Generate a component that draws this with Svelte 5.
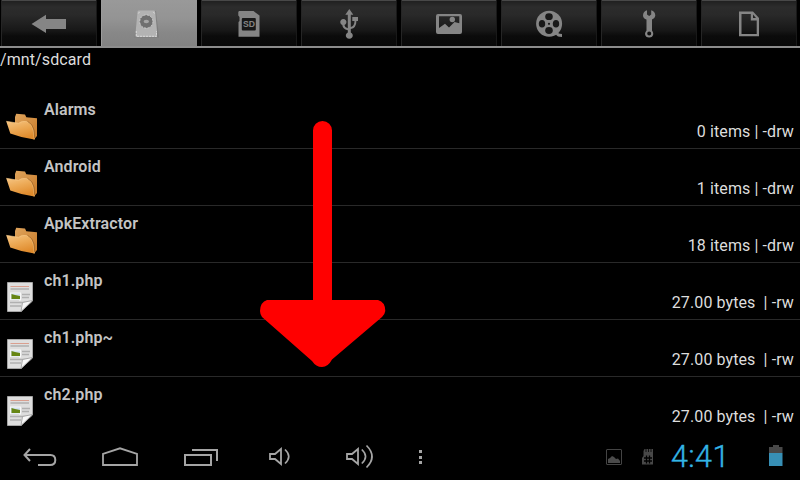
<script>
  const tabs = ['back', 'disk', 'sd', 'usb', 'image', 'film', 'tools', 'page'];
  const rows = [
    { name: 'Alarms', info: '0 items | -drw', folder: true },
    { name: 'Android', info: '1 items | -drw', folder: true },
    { name: 'ApkExtractor', info: '18 items | -drw', folder: true },
    { name: 'ch1.php', info: '27.00 bytes  | -rw' },
    { name: 'ch1.php~', info: '27.00 bytes  | -rw' },
    { name: 'ch2.php', info: '27.00 bytes  | -rw' }
  ];
</script>

<svg class="defs" width="0" height="0" aria-hidden="true">
  <defs>
    <linearGradient id="back-leaf" x1="0" y1="0" x2="1" y2="1">
      <stop offset="0" stop-color="#dfa45c" /><stop offset="1" stop-color="#c87a28" />
    </linearGradient>
    <linearGradient id="front-leaf" x1="0" y1="0" x2="0.4" y2="1">
      <stop offset="0" stop-color="#f6c583" /><stop offset="0.5" stop-color="#eca955" /><stop offset="1" stop-color="#e08c2e" />
    </linearGradient>
  </defs>
</svg>

<div class="screen">
  <nav class="tabs">
    {#each tabs as tab}
      <button class="tab" class:active={tab === 'disk'} aria-label={tab}>
        <svg width="96" height="46" viewBox="1 0 96 46" fill="#858585">
          {#if tab === 'back'}
            <path d="M31.5 24 46 14.7V19H66V29H46V33Z" />
          {:else if tab === 'disk'}
            <path d="M39 11 34.5 37.5H59L56 11Z" fill="#6f6f6f" opacity=".45" />
            <path d="M38.5 10.5H54Q55 10.5 55.2 12L57 31V37H35.7V31L37.5 12Q37.6 10.5 38.5 10.5Z" fill="#b3b3b3" />
            <path d="M36.3 31V36.3H56.5V31M38.3 13.5 40 11.3M54.5 13.5 53 11.3" fill="none" stroke="#d9d9d9" stroke-dasharray="2 1" />
            <circle cx="46.3" cy="21.5" r="6.6" fill="#707070" stroke="#d6d6d6" stroke-width=".8" stroke-dasharray="2 1.5" />
            <ellipse cx="46.3" cy="21.5" rx="2.7" ry="1.8" fill="#a6a6a6" />
          {:else if tab === 'sd'}
            <path d="M39 11H53.5L59.5 15.5V36.8H38.5V22L39.5 21V17L38.3 15.5V12Z" />
            <rect x="41.8" y="18" width="14" height="12.5" rx="1" fill="#171717" />
            <text x="48.9" y="27.3" text-anchor="middle" font-size="9" font-weight="bold" textLength="12" lengthAdjust="spacingAndGlyphs">SD</text>
          {:else if tab === 'usb'}
            <path d="M49.3 9 53.3 14.7H50.8V27Q54.5 26 54.5 21H52.3V17H58V21H56.4Q56.4 28 50.8 29V32.5A3.5 3.3 0 1 1 47.8 32.5V30.2Q42.5 29 42.3 25A3.1 3.1 0 1 1 44.4 25Q44.7 27.5 47.8 28.3V14.7H45.3Z" />
          {:else if tab === 'image'}
            <path fill-rule="evenodd" d="M38 14H60Q62 14 62 16V32Q62 34 60 34H38Q36 34 36 32V16Q36 14 38 14ZM39 16.2V28L45 23.8 49 27.5 54.5 22 59.3 23.2V16.2Z" />
            <circle cx="52.3" cy="19.5" r="2.7" />
          {:else if tab === 'film'}
            <circle cx="49.1" cy="23.8" r="13" />
            <path d="M53 35 58 31.5Q57.5 34 62 34V37Q57 37 56 34.5Z" />
            <g fill="#191919">
              <ellipse cx="49" cy="16.7" rx="3.8" ry="3.4" /><ellipse cx="49" cy="30.5" rx="3.8" ry="3.4" />
              <ellipse cx="42" cy="23.8" rx="3.2" ry="3.8" /><ellipse cx="56" cy="23.8" rx="3.2" ry="3.8" />
              <circle cx="49" cy="23.8" r="1.1" />
            </g>
          {:else if tab === 'tools'}
            <path fill-rule="evenodd" d="M47 10.2V14.5L49.2 16 51.2 14.5V10.2Q55.3 11.5 55.3 15.7Q54.8 18.8 52 19.5V30.5Q53.3 32 53.3 34A4.2 4.2 0 0 1 45 34Q45 32 46.5 30.5V19.5Q43.2 18.7 43 15.5Q43 11.5 47 10.2ZM49.2 31.6A2 2 0 1 0 49.2 35.6A2 2 0 1 0 49.2 31.6Z" />
          {:else}
            <path fill-rule="evenodd" d="M39 11.5H53L59 18V36.3H39ZM41.5 14V34H56.7V20.5H50.8V14Z" />
            <path d="M53 14.5 56 18H53Z" fill="#222" />
          {/if}
        </svg>
      </button>
    {/each}
  </nav>

  <div class="path"><span>/mnt/sdcard</span></div>

  <main class="list">
    {#each rows as row}
      <div class="row">
        <svg class="icon" class:file={!row.folder} width="40" height="36" viewBox="0 0 40 36">
          {#if row.folder}
            <path d="M15 4 16.2.8 25 1.5 26.3 4.3 37 5.3V23L34 26.5 15 17Z" fill="url(#back-leaf)" />
            <path d="M6.2 8.3 18.5 10.3Q22 7.5 26.5 8.6Q31.5 10 33.2 17L34.4 26.5Q22 25 10.3 20.5Z" fill="url(#front-leaf)" />
            <path d="M6.4 8.3 18.5 10.3Q22 7.5 26.5 8.6Q31.5 10 33.2 17L34.4 26.5" fill="none" stroke="#f9c987" stroke-width=".6" />
            <path d="M27.5 8.3Q32.7 11 34 17L34.7 25" fill="none" stroke="#965b1c" stroke-width=".7" />
          {:else}
            <path d="M7.5.5H32.5V19L21 29.5H7.5Z" fill="#dedede" stroke="#a5a5a5" />
            <path d="M10.5 4.5H29" stroke="#d99f8f" />
            <path d="M10.5 7H29M22 12.5H30M22 15.5H29M10 20.5H28M10 24H21M10 18H19" stroke="#b0b0b0" stroke-width="1.3" />
            <rect x="10.5" y="11" width="10" height="7" fill="#d3e1ed" stroke="#f8f8f8" />
            <path d="M11.5 12 15 13 20 14V17H11.5Z" fill="#668615" />
            <path d="M21 29.5 22.5 20.5 32.5 18.5Z" fill="#f8f8f8" stroke="#999" stroke-width=".8" />
          {/if}
        </svg>
        <span class="name">{row.name}</span>
        <span class="info">{row.info}</span>
      </div>
    {/each}
  </main>

  <footer class="bar">
    <svg width="440" height="46" viewBox="0 434 440 46" fill="none" stroke="#a5a5a5" stroke-width="2">
      <path d="M30 449 24.5 455 30 461M25 455H50.5Q55.3 455 55.3 460T50 465H38" />
      <path d="M103 465V454L120 448.3 137 454V465Z" stroke-width="1.8" />
      <path d="M185 455H211V465H185ZM192 450H217V461" />
      <path d="M270 454H275L281 449V464L275 459H270Z" stroke-width="1.8" />
      <path d="M285 449.5Q292.5 456.5 285 463.5" stroke-width="1.7" />
      <path d="M347 454H352L358 449V464L352 459H347Z" stroke-width="1.8" />
      <path d="M361.8 449.5Q369.3 456.5 361.8 463.5M366.5 445.5Q377.5 456.5 366.5 467.5" stroke-width="1.7" />
      <path d="M419 450h3v3h-3zM419 456h3v3h-3zM419 461h3v3h-3z" fill="#a5a5a5" stroke="none" />
    </svg>
    <div class="status">
      <svg width="66" height="46" viewBox="600 434 66 46">
        <rect x="606.5" y="449.5" width="15" height="15" rx=".5" fill="none" stroke="#444" />
        <path d="M608 463V459L610 458 612 456 614 457 616 459 618 458.5 620 461V463Z" fill="#4b4b4b" />
        <path d="M644.5 449H653V464.5H642V458L643.5 456V451Z" fill="#484848" />
        <path d="M646 449V452M648.5 449V452M651 449V452" stroke="#111" />
        <path d="M646.5 455.5V463.5M649.5 455.5V463.5M644 458H652M644 461H652" stroke="#000" stroke-width="1.3" />
      </svg>
      <span class="clock">4:41</span>
      <svg width="30" height="46" viewBox="760 434 30 46">
        <path d="M773 445H779V447H782.5V453H769V447H773Z" fill="#484848" />
        <rect x="769" y="453" width="13.5" height="13" fill="#378fb5" />
      </svg>
    </div>
  </footer>

  <svg class="arrow" width="126" height="248" viewBox="0 0 126 248" fill="#f00">
    <path d="M53 9.5A9.5 9.5 0 0 1 72 9.5V179H118Q125.3 181 125.3 190Q125 193 122 196L72 238.5Q68 246 62 246Q56 246 52 240L2 196Q0 193 0 190Q.3 181 7 179H53Z" />
  </svg>
</div>

<style>
  :global(body) { background: #000; }
  .defs { position: absolute; }
  .screen {
    position: relative;
    display: flex;
    flex-direction: column;
    width: 800px;
    height: 480px;
    overflow: hidden;
    background: #000;
    color: #ddd;
    font-family: Roboto, sans-serif;
    font-size: 16px;
  }
  .tabs { display: flex; height: 46px; border-bottom: 2px solid #8c8c8c; flex: none; }
  .tab {
    width: 96px;
    height: 46px;
    margin: 0 3px 0 1px;
    padding: 0;
    border: 0;
    font-family: "Liberation Sans", sans-serif;
    background: linear-gradient(#484848 0 1px, #202020 1px, #2c2c2c 7px, #292929 15px, #202020 23px, #181818 30px, #0b0b0b 36px, #080808);
    box-shadow: inset 1px 0 #252525, inset -1px 0 #191919;
  }
  .tab.active { background: linear-gradient(#999, #949494 18px, #888 32px, #828282); box-shadow: inset 1px 0 #9b9b9b; }
  .tab svg { display: block; }
  .path { height: 44px; line-height: 24px; flex: none; }
  .path span { letter-spacing: .1px; }
  .list { flex: none; height: 342px; }
  .row {
    display: flex;
    box-sizing: border-box;
    height: 57px;
    padding-right: 6px;
    border-bottom: 1px solid #292929;
  }
  .row:last-child { border-bottom-color: transparent; }
  .icon { margin-top: 21px; flex: none; }
  .icon.file { margin-top: 19px; }
  .name { margin: 7px 0 0 4px; line-height: 22px; font-weight: 600; color: #c4c4c4; letter-spacing: .1px; }
  .info { margin: 29px 0 0 auto; line-height: 22px; white-space: pre; letter-spacing: .1px; }
  .bar { display: flex; justify-content: space-between; height: 46px; flex: none; background: #000; }
  .status { display: flex; width: 200px; }
  .clock {
    width: 94px;
    box-sizing: border-box;
    padding-left: 5px;
    line-height: 46px;
    font-size: 30.5px;
    font-weight: 300;
    letter-spacing: .4px;
    color: #33b5e5;
    -webkit-text-stroke: .4px #33b5e5;
  }
  .arrow { position: absolute; left: 260px; top: 121px; }
</style>
